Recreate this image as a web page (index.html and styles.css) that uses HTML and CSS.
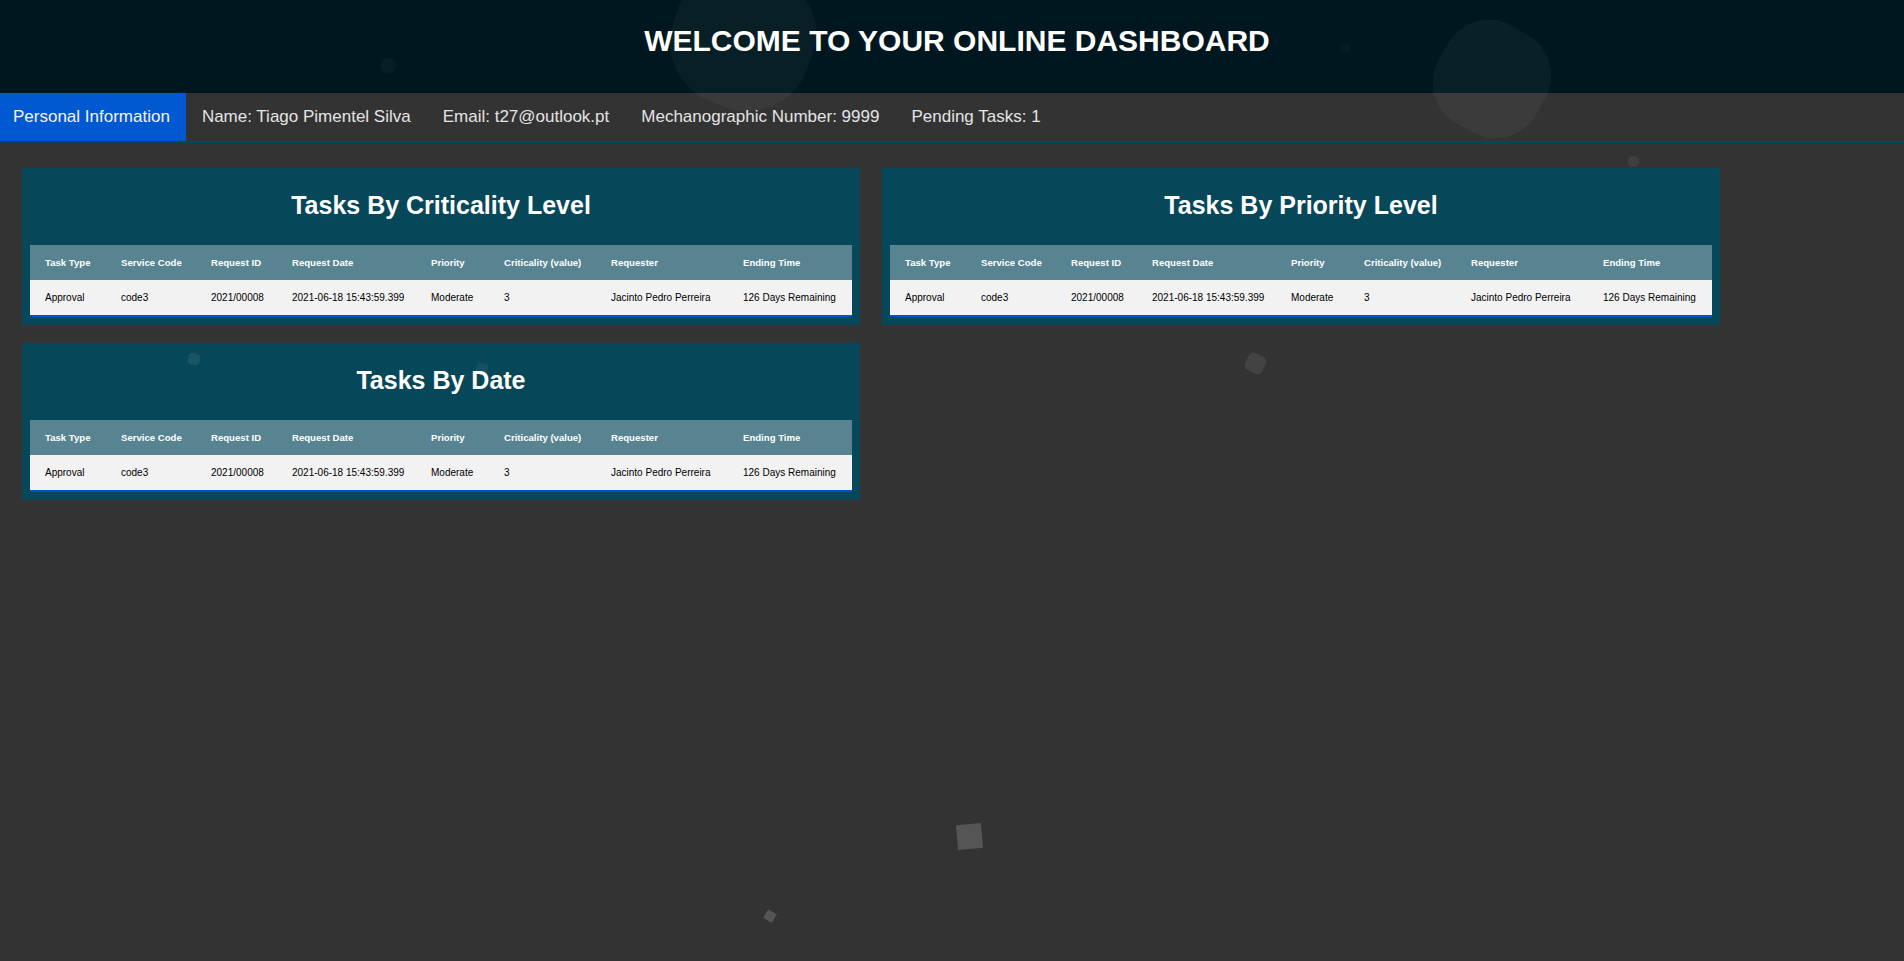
FILE: index.html
```html
<!DOCTYPE html>
<html lang="en">
<head>
  <meta charset="UTF-8">
  <meta name="viewport" content="width=device-width, initial-scale=1.0">
  <title>Online Dashboard</title>
  <link rel="stylesheet" href="styles.css">
</head>
<body>
<header class="top">
  <h1>WELCOME TO YOUR ONLINE DASHBOARD</h1>
</header>
<nav class="info-bar">
  <span class="info-title">Personal Information</span>
  <span class="info-item">Name: Tiago Pimentel Silva</span>
  <span class="info-item">Email: t27@outlook.pt</span>
  <span class="info-item">Mechanographic Number: 9999</span>
  <span class="info-item">Pending Tasks: 1</span>
</nav>
<main class="panels">
  <section class="panel">
    <h2>Tasks By Criticality Level</h2>
    <table class="tasks">
      <thead>
        <tr><th>Task Type</th><th>Service Code</th><th>Request ID</th><th>Request Date</th><th>Priority</th><th>Criticality (value)</th><th>Requester</th><th>Ending Time</th></tr>
      </thead>
      <tbody>
        <tr><td>Approval</td><td>code3</td><td>2021/00008</td><td>2021-06-18 15:43:59.399</td><td>Moderate</td><td>3</td><td>Jacinto Pedro Perreira</td><td>126 Days Remaining</td></tr>
      </tbody>
    </table>
  </section>
  <section class="panel">
    <h2>Tasks By Priority Level</h2>
    <table class="tasks">
      <thead>
        <tr><th>Task Type</th><th>Service Code</th><th>Request ID</th><th>Request Date</th><th>Priority</th><th>Criticality (value)</th><th>Requester</th><th>Ending Time</th></tr>
      </thead>
      <tbody>
        <tr><td>Approval</td><td>code3</td><td>2021/00008</td><td>2021-06-18 15:43:59.399</td><td>Moderate</td><td>3</td><td>Jacinto Pedro Perreira</td><td>126 Days Remaining</td></tr>
      </tbody>
    </table>
  </section>
  <section class="panel">
    <h2>Tasks By Date</h2>
    <table class="tasks">
      <thead>
        <tr><th>Task Type</th><th>Service Code</th><th>Request ID</th><th>Request Date</th><th>Priority</th><th>Criticality (value)</th><th>Requester</th><th>Ending Time</th></tr>
      </thead>
      <tbody>
        <tr><td>Approval</td><td>code3</td><td>2021/00008</td><td>2021-06-18 15:43:59.399</td><td>Moderate</td><td>3</td><td>Jacinto Pedro Perreira</td><td>126 Days Remaining</td></tr>
      </tbody>
    </table>
  </section>
</main>
<div class="floaters">
  <span class="floater blob-a"></span>
  <span class="floater blob-b"></span>
  <span class="floater dot-a"></span>
  <span class="floater dot-b"></span>
  <span class="floater dot-c"></span>
  <span class="floater dot-d"></span>
  <span class="floater dot-e"></span>
  <span class="floater tile-a"></span>
  <span class="floater tile-b"></span>
  <span class="floater tile-c"></span>
</div>
</body>
</html>
```

FILE: styles.css
```css
html, body { height: 100%; }
body { font-family: "Liberation Sans", Arial, sans-serif; background: #333; color: #fff; margin: 0; padding: 0; overflow: hidden; position: relative; }

.top { height: 93px; background: #00171f; display: flex; align-items: center; justify-content: center; padding-left: 10px; box-sizing: border-box; }
.top h1 { margin: 0 0 11px 0; font-size: 30px; font-weight: bold; }

.info-bar { display: flex; height: 48px; border-bottom: 2px solid #07475a; font-size: 17px; color: #e4e4e4; }
.info-title { display: flex; align-items: center; background: #0059d1; color: #f4f4f4; padding: 0 16px 0 13px; }
.info-item { display: flex; align-items: center; padding: 0 16px; }

.panels { display: grid; grid-template-columns: repeat(2, 838px); gap: 18px 22px; padding: 25px 0 0 22px; align-items: start; }
.panel { background: #07475a; padding: 8px; }
.panel h2 { margin: 0; height: 69px; line-height: 58px; font-size: 25px; text-align: center; }

.tasks { width: 100%; table-layout: fixed; border-collapse: separate; border-spacing: 0; }
.tasks th, .tasks td { padding: 0 0 0 15px; text-align: left; white-space: nowrap; box-sizing: border-box; }
.tasks th { height: 35px; background: #588390; color: #fff; font-size: 9.6px; font-weight: bold; }
.tasks td { height: 37px; background: #f2f2f2; color: #000; font-size: 10px; border-bottom: 2px solid #0052cc; }
.tasks th:nth-child(1) { width: 76px; }
.tasks th:nth-child(2) { width: 90px; }
.tasks th:nth-child(3) { width: 81px; }
.tasks th:nth-child(4) { width: 139px; }
.tasks th:nth-child(5) { width: 73px; }
.tasks th:nth-child(6) { width: 107px; }
.tasks th:nth-child(7) { width: 132px; }
.tasks th:nth-child(8) { width: 124px; }

.floaters { position: absolute; inset: 0; overflow: hidden; pointer-events: none; }
.floater { position: absolute; display: block; background: rgba(255,255,255,.05); }
.blob-a { left: 1436px; top: 23px; width: 112px; height: 112px; border-radius: 42%; transform: rotate(30deg); background: rgba(255,255,255,.04); }
.blob-b { left: 672px; top: -33px; width: 142px; height: 142px; border-radius: 45%; transform: rotate(20deg); background: rgba(255,255,255,.035); }
.dot-a { left: 381px; top: 58px; width: 15px; height: 15px; border-radius: 40%; background: rgba(255,255,255,.03); }
.dot-b { left: 1340px; top: 43px; width: 10px; height: 10px; border-radius: 40%; background: rgba(255,255,255,.025); }
.dot-c { left: 1628px; top: 156px; width: 11px; height: 11px; border-radius: 40%; background: rgba(255,255,255,.06); }
.dot-d { left: 188px; top: 353px; width: 12px; height: 12px; border-radius: 35%; transform: rotate(15deg); background: rgba(255,255,255,.08); }
.dot-e { left: 476px; top: 363px; width: 12px; height: 12px; border-radius: 35%; transform: rotate(20deg); background: rgba(255,255,255,.06); }
.tile-a { left: 1246px; top: 354px; width: 19px; height: 19px; border-radius: 28%; transform: rotate(25deg); background: rgba(255,255,255,.08); }
.tile-b { left: 957px; top: 824px; width: 25px; height: 25px; transform: rotate(-5deg); background: rgba(255,255,255,.17); }
.tile-c { left: 765px; top: 911px; width: 10px; height: 10px; transform: rotate(30deg); background: rgba(255,255,255,.17); }
```
